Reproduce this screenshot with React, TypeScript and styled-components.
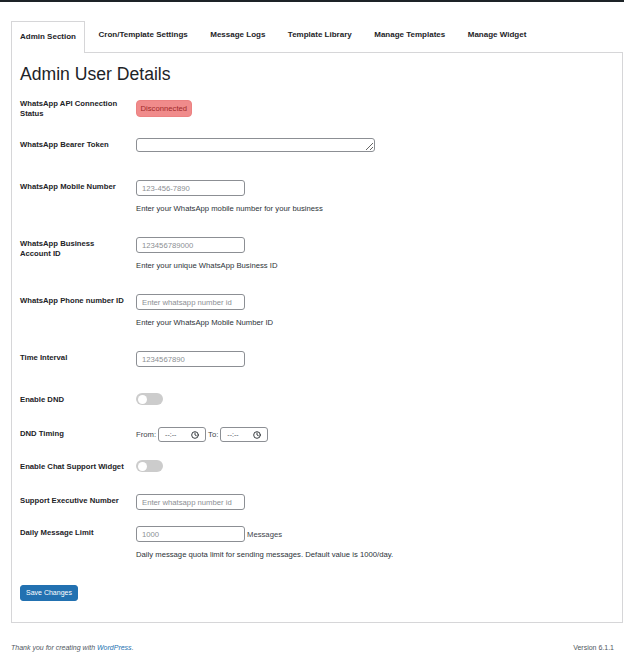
import React from "react";
import styled, { createGlobalStyle } from "styled-components";
import { Clock } from "lucide-react";

const GlobalStyle = createGlobalStyle`
  html, body {
    margin: 0;
    padding: 0;
    background: #ffffff;
    font-family: "Liberation Sans", Arial, sans-serif;
    color: #1d2327;
  }
`;

const TopBar = styled.div`
  height: 2px;
  background: #1d2327;
`;

const Wrap = styled.div`
  margin: 0 1px 0 11px;
`;

const TabNav = styled.nav`
  display: flex;
  align-items: flex-end;
  gap: 4.5px;
  padding-top: 19px;
`;

const Tab = styled.a<{ $active?: boolean }>`
  display: block;
  box-sizing: border-box;
  padding: ${(p) => (p.$active ? "10px 8px 0" : "7.5px 8px 0")};
  height: ${(p) => (p.$active ? "32px" : "31px")};
  font-size: 8px;
  line-height: 10px;
  font-weight: 700;
  color: #1d2327;
  text-decoration: none;
  white-space: nowrap;
  border: 1px solid ${(p) => (p.$active ? "#d6d6d8" : "transparent")};
  border-bottom: none;
  background: ${(p) => (p.$active ? "#ffffff" : "transparent")};
  margin-bottom: ${(p) => (p.$active ? "-1px" : "0")};
  position: relative;
  z-index: 1;
`;

const Panel = styled.div`
  border: 1px solid #d6d6d8;
  padding: 10px 9px 21px 8px;
  background: #ffffff;
`;

const Heading = styled.h1`
  margin: 0 0 3px;
  font-size: 17.6px;
  line-height: 22px;
  font-weight: 400;
  color: #1d2327;
`;

const Row = styled.div<{ $extra?: number }>`
  display: grid;
  grid-template-columns: 116px 1fr;
  align-items: start;
  padding-bottom: ${(p) => p.$extra ?? 0}px;
`;

const Label = styled.div`
  box-sizing: border-box;
  padding: 11px 10px 10px 0;
  font-size: 7.7px;
  line-height: 10px;
  font-weight: 700;
  color: #1d2327;
`;

const Field = styled.div<{ $tight?: boolean }>`
  padding: 9px 0 ${(p) => (p.$tight ? "7px" : "9px")};
  font-size: 7.7px;
  line-height: 11px;
  color: #3c434a;
`;

const Inline = styled.div`
  display: flex;
  align-items: center;
  gap: 2px;
`;

const Badge = styled.span`
  display: inline-flex;
  align-items: center;
  box-sizing: border-box;
  margin-top: 3px;
  height: 17px;
  padding: 0 3.5px;
  border-radius: 4px;
  background: #f08b8b;
  border: 1px solid #ec8282;
  color: #a12a2a;
  font-size: 7.7px;
`;

const TextArea = styled.textarea`
  display: block;
  box-sizing: border-box;
  width: 239px;
  height: 14px;
  min-height: 14px;
  margin: 0;
  padding: 0 4px;
  border: 1px solid #8c8f94;
  border-radius: 3px;
  font-family: inherit;
  font-size: 7.7px;
  resize: vertical;
  background: #ffffff;
`;

const TextInput = styled.input`
  display: block;
  box-sizing: border-box;
  width: 109px;
  height: 16px;
  margin: 0;
  padding: 0 5px;
  border: 1px solid #8c8f94;
  border-radius: 3px;
  font-family: inherit;
  font-size: 7.7px;
  color: #2c3338;
  background: #ffffff;
  &::placeholder {
    color: #8c8f94;
  }
`;

const Description = styled.p`
  margin: 7px 0 5px;
  font-size: 7.7px;
  line-height: 11px;
  color: #2c3338;
`;

const Toggle = styled.span<{ $on?: boolean }>`
  display: block;
  position: relative;
  width: 27px;
  height: 12px;
  border-radius: 6px;
  background: ${(p) => (p.$on ? "#2271b1" : "#cccccc")};
  &::after {
    content: "";
    position: absolute;
    top: 1.5px;
    left: ${(p) => (p.$on ? "16.5px" : "1.5px")};
    width: 9px;
    height: 9px;
    border-radius: 50%;
    background: #ffffff;
  }
`;

const TimeBox = styled.span`
  display: inline-flex;
  align-items: center;
  justify-content: space-between;
  box-sizing: border-box;
  width: 48px;
  height: 15px;
  padding: 0 6px;
  border: 1px solid #8c8f94;
  border-radius: 3px;
  font-size: 7px;
  color: #50575e;
  background: #ffffff;
`;

const FieldText = styled.span`
  font-size: 7.7px;
  color: #3c434a;
`;

const SaveButton = styled.button`
  margin-top: 10.5px;
  height: 16px;
  padding: 0 5px;
  border: 1px solid #2271b1;
  border-radius: 3px;
  background: #2271b1;
  color: #ffffff;
  font-family: inherit;
  font-size: 7px;
  cursor: pointer;
`;

const Footer = styled.div`
  display: flex;
  justify-content: space-between;
  padding: 20px 9px 0 0;
  font-size: 7px;
  line-height: 10px;
  color: #50575e;
`;

const FooterNote = styled.span`
  font-style: italic;
  a {
    color: #2271b1;
    text-decoration: none;
  }
`;

const tabs = [
  "Admin Section",
  "Cron/Template Settings",
  "Message Logs",
  "Template Library",
  "Manage Templates",
  "Manage Widget",
];

const TimeField = () => (
  <TimeBox>
    <span>--:--</span>
    <Clock size={8} strokeWidth={2.6} color="#1d2327" />
  </TimeBox>
);

export default function App() {
  return (
    <>
      <GlobalStyle />
      <TopBar />
      <Wrap>
        <TabNav>
          {tabs.map((t, i) => (
            <Tab key={t} href="#" $active={i === 0}>
              {t}
            </Tab>
          ))}
        </TabNav>
        <Panel>
          <Heading>Admin User Details</Heading>

          <Row>
            <Label>WhatsApp API Connection Status</Label>
            <Field>
              <Badge>Disconnected</Badge>
            </Field>
          </Row>

          <Row $extra={10}>
            <Label>WhatsApp Bearer Token</Label>
            <Field>
              <TextArea rows={1} />
            </Field>
          </Row>

          <Row>
            <Label>WhatsApp Mobile Number</Label>
            <Field>
              <TextInput placeholder="123-456-7890" />
              <Description>Enter your WhatsApp mobile number for your business</Description>
            </Field>
          </Row>

          <Row>
            <Label>WhatsApp Business Account ID</Label>
            <Field>
              <TextInput placeholder="123456789000" />
              <Description>Enter your unique WhatsApp Business ID</Description>
            </Field>
          </Row>

          <Row>
            <Label>WhatsApp Phone number ID</Label>
            <Field>
              <TextInput placeholder="Enter whatsapp number id" />
              <Description>Enter your WhatsApp Mobile Number ID</Description>
            </Field>
          </Row>

          <Row $extra={8}>
            <Label>Time Interval</Label>
            <Field>
              <TextInput placeholder="1234567890" />
            </Field>
          </Row>

          <Row $extra={3}>
            <Label>Enable DND</Label>
            <Field>
              <Toggle />
            </Field>
          </Row>

          <Row>
            <Label>DND Timing</Label>
            <Field>
              <Inline>
                <FieldText>From:</FieldText>
                <TimeField />
                <FieldText>To:</FieldText>
                <TimeField />
              </Inline>
            </Field>
          </Row>

          <Row $extra={3}>
            <Label>Enable Chat Support Widget</Label>
            <Field>
              <Toggle />
            </Field>
          </Row>

          <Row>
            <Label>Support Executive Number</Label>
            <Field $tight>
              <TextInput placeholder="Enter whatsapp number id" />
            </Field>
          </Row>

          <Row>
            <Label>Daily Message Limit</Label>
            <Field>
              <Inline>
                <TextInput placeholder="1000" />
                <FieldText>Messages</FieldText>
              </Inline>
              <Description>
                Daily message quota limit for sending messages. Default value is 1000/day.
              </Description>
            </Field>
          </Row>

          <SaveButton type="button">Save Changes</SaveButton>
        </Panel>
        <Footer>
          <FooterNote>
            Thank you for creating with <a href="#">WordPress</a>.
          </FooterNote>
          <span>Version 6.1.1</span>
        </Footer>
      </Wrap>
    </>
  );
}
